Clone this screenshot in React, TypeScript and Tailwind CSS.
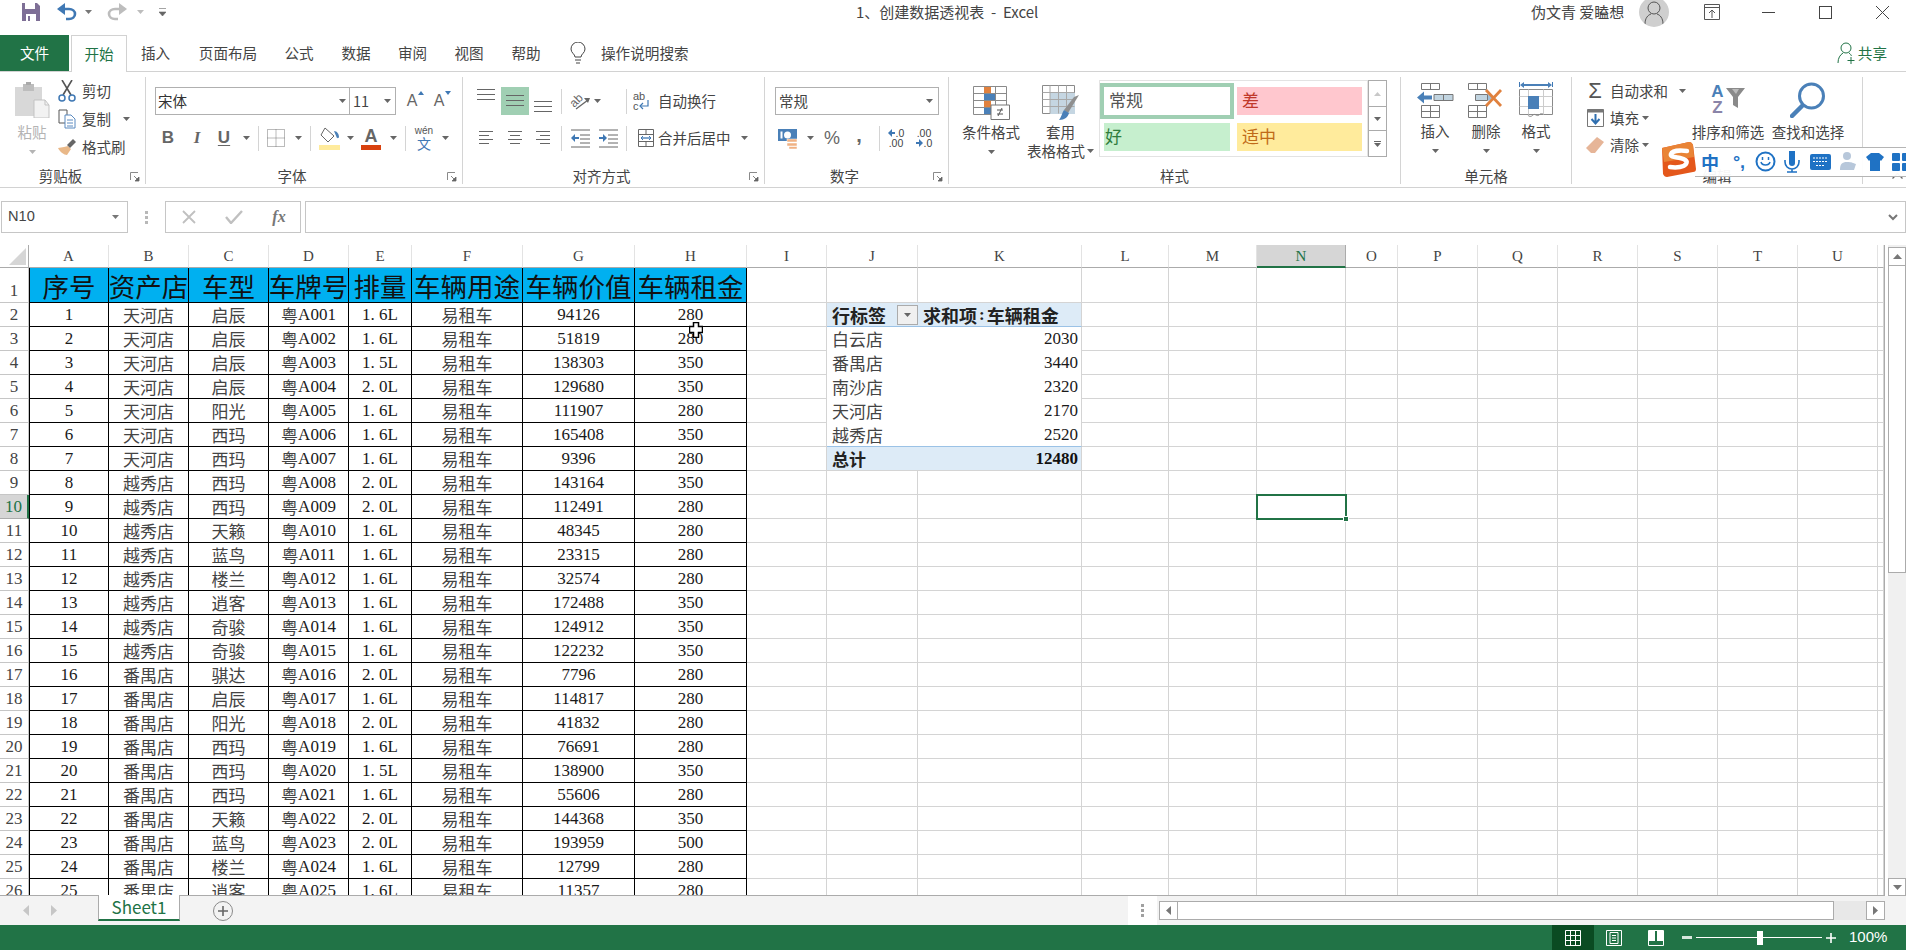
import React from "react";

type Row = [number, string, string, string, string, number, number];

const shop1 = "天河店";
const shop2 = "越秀店";
const shop3 = "番禺店";
const rows: Row[] = [
  [1, shop1, "启辰", "A001", "1. 6L", 94126, 280],
  [2, shop1, "启辰", "A002", "1. 6L", 51819, 280],
  [3, shop1, "启辰", "A003", "1. 5L", 138303, 350],
  [4, shop1, "启辰", "A004", "2. 0L", 129680, 350],
  [5, shop1, "阳光", "A005", "1. 6L", 111907, 280],
  [6, shop1, "西玛", "A006", "1. 6L", 165408, 350],
  [7, shop1, "西玛", "A007", "1. 6L", 9396, 280],
  [8, shop2, "西玛", "A008", "2. 0L", 143164, 350],
  [9, shop2, "西玛", "A009", "2. 0L", 112491, 280],
  [10, shop2, "天籁", "A010", "1. 6L", 48345, 280],
  [11, shop2, "蓝鸟", "A011", "1. 6L", 23315, 280],
  [12, shop2, "楼兰", "A012", "1. 6L", 32574, 280],
  [13, shop2, "逍客", "A013", "1. 6L", 172488, 350],
  [14, shop2, "奇骏", "A014", "1. 6L", 124912, 350],
  [15, shop2, "奇骏", "A015", "1. 6L", 122232, 350],
  [16, shop3, "骐达", "A016", "2. 0L", 7796, 280],
  [17, shop3, "启辰", "A017", "1. 6L", 114817, 280],
  [18, shop3, "阳光", "A018", "2. 0L", 41832, 280],
  [19, shop3, "西玛", "A019", "1. 6L", 76691, 280],
  [20, shop3, "西玛", "A020", "1. 5L", 138900, 350],
  [21, shop3, "西玛", "A021", "1. 6L", 55606, 280],
  [22, shop3, "天籁", "A022", "2. 0L", 144368, 350],
  [23, shop3, "蓝鸟", "A023", "2. 0L", 193959, 500],
  [24, shop3, "楼兰", "A024", "1. 6L", 12799, 280],
  [25, shop3, "逍客", "A025", "1. 6L", 11357, 280],
];

const colNames = ["A", "B", "C", "D", "E", "F", "G", "H", "I", "J", "K", "L", "M", "N", "O", "P", "Q", "R", "S", "T", "U", ""];
const headers = ["序号", "资产店", "车型", "车牌号", "排量", "车辆用途", "车辆价值", "车辆租金"];
const pivot: [string, number][] = [
  ["白云店", 2030],
  ["番禺店", 3440],
  ["南沙店", 2320],
  ["天河店", 2170],
  ["越秀店", 2520],
];

const serif = "[font-family:'Liberation_Serif',serif]";
const gridCell = "border-r border-b border-[#d4d4d4]";
const dataCell = "border-r border-b border-black flex items-center justify-center overflow-hidden whitespace-nowrap";
const num = "[font-family:'Liberation_Serif',serif] text-[17px] leading-[20px] text-[#1a1a1a]";
const cjk = "text-[17px] leading-[20px] text-[#444]";

function Caret({ c = "#666666" }: { c?: string }) {
  return (
    <svg width="7" height="4" viewBox="0 0 7 4" className="shrink-0">
      <path d="M0 0h7L3.5 4z" fill={c} />
    </svg>
  );
}

function S({ w, children }: { w: string; children?: React.ReactNode }) {
  return <div className={`${w} h-full flex items-center justify-center shrink-0`}>{children}</div>;
}

function Sep() {
  return <div className="w-px h-[25px] bg-[#d4d4d4]" />;
}

function Launcher() {
  return (
    <svg width="10" height="10" viewBox="0 0 10 10" className="absolute right-[5px] top-[4px]">
      <path d="M0.5 8V0.5H8" fill="none" stroke="#8a8a8a" />
      <path d="M4 4l4 4M9 5v4H5z" stroke="#666" fill="#666" strokeWidth="0.8" />
    </svg>
  );
}

function Group({ w, label, launcher, children }: { w: string; label: string; launcher?: boolean; children: React.ReactNode }) {
  return (
    <div className={`${w} h-[107px] shrink-0 border-r border-[#d4d4d4] flex flex-col`}>
      <div className="h-[91px] overflow-visible">{children}</div>
      <div className={`relative h-[16px] leading-[16px] text-center text-[14.5px] text-[#444] ${launcher ? "pr-[24px]" : ""}`}>
        {label}
        {launcher && <Launcher />}
      </div>
    </div>
  );
}

function Lines({ w = 18, rows = 3, gap = 5, widths }: { w?: number; rows?: number; gap?: number; widths?: number[][] }) {
  const h = (rows - 1) * gap + 1;
  return (
    <svg width={w} height={h + 1} viewBox={`0 0 ${w} ${h + 1}`}>
      {Array.from({ length: rows }).map((_, i) => {
        const x = widths ? widths[i] : [0, w];
        return <path key={i} d={`M${x[0]} ${i * gap + 0.5}H${x[1]}`} stroke="#666" />;
      })}
    </svg>
  );
}

function RibbonText({ children, c = "" }: { children: React.ReactNode; c?: string }) {
  return <span className={`text-[14.5px] text-[#444] whitespace-nowrap leading-[20px] ${c}`}>{children}</span>;
}

function SaveIcon() {
  return (
    <svg width="18" height="18" viewBox="0 0 18 18">
      <path d="M0 0h15l3 3v15H0z" fill="#7e6f96" />
      <path d="M3 0h10v6H3z" fill="#fff" />
      <path d="M4 11h10v7H4z" fill="#fff" />
      <path d="M6 13h2v5H6z" fill="#7e6f96" />
    </svg>
  );
}

function Undo({ c, flip }: { c: string; flip?: boolean }) {
  return (
    <svg width="20" height="18" viewBox="0 0 20 18" className={flip ? "-scale-x-100" : ""}>
      <path d="M2 6h10c3.5 0 6 2.200 6 5s-2.500 5-6 5H9" fill="none" stroke={c} strokeWidth="2.600" />
      <path d="M8 0v12L0 6z" fill={c} />
    </svg>
  );
}

function PasteIcon() {
  return (
    <svg width="36" height="36" viewBox="0 0 36 36">
      <path d="M1 5h27v29H1z" fill="#d8d8d8" />
      <path d="M9 2h11v7H9z" fill="#bdbdbd" />
      <path d="M12 0h5v3h-5z" fill="#aaa" />
      <path d="M20 18h11l4 5v13H20z" fill="#f2f2f2" stroke="#c3c3c3" />
      <path d="M31 18v5h4" fill="none" stroke="#c3c3c3" />
    </svg>
  );
}

function Scissors() {
  return (
    <svg width="18" height="22" viewBox="0 0 18 22">
      <path d="M4 0l9 15M14 0L5 15" stroke="#555" strokeWidth="1.600" fill="none" />
      <circle cx="4" cy="18" r="3" fill="none" stroke="#3f78b4" strokeWidth="1.500" />
      <circle cx="14" cy="18" r="3" fill="none" stroke="#3f78b4" strokeWidth="1.500" />
    </svg>
  );
}

function CopyIcon() {
  return (
    <svg width="18" height="20" viewBox="0 0 18 20">
      <path d="M1 1h8v13H1z" fill="#fff" stroke="#555" />
      <path d="M7 6h6l4 4v9H7z" fill="#fff" stroke="#5a8ac0" />
      <path d="M9 11h6M9 14h6M9 17h6" stroke="#5a8ac0" />
    </svg>
  );
}

function Brush() {
  return (
    <svg width="18" height="18" viewBox="0 0 18 18">
      <path d="M10 8l3 3-4 6c-3 0-7-3-9-7l6-1z" fill="#e9b888" />
      <path d="M9 7l6-6 3 3-6 6z" fill="#666" />
    </svg>
  );
}

function BorderIcon() {
  return (
    <svg width="18" height="18" viewBox="0 0 18 18">
      <path d="M.5.5h17v17H.5zM9 .5v17M.5 9h17" fill="none" stroke="#777" strokeDasharray="1 1" />
    </svg>
  );
}

function FillIcon() {
  return (
    <svg width="21" height="24" viewBox="0 0 21 24">
      <path d="M6 2l9 8-6 6-7-7z" fill="#fff" stroke="#666" />
      <path d="M15 5c3 0 5 3 5 6 0 1-2 2-2.500 0z" fill="#4a80b8" />
      <path d="M0 19h21v5H0z" fill="#ffeb9c" />
    </svg>
  );
}

function OrientIcon() {
  return (
    <svg width="22" height="20" viewBox="0 0 22 20">
      <text x="1" y="13" fontSize="12" fill="#666" transform="rotate(-45 8 10)" fontFamily="Liberation Sans">ab</text>
      <path d="M7 18l12-9" stroke="#666" strokeWidth="1.300" />
      <path d="M15 7l6 0-2 5z" fill="#666" />
    </svg>
  );
}

function IndentIcon({ out }: { out?: boolean }) {
  return (
    <svg width="19" height="19" viewBox="0 0 19 19">
      <path d="M0 1h19M9 6h10M9 10h10M9 14h10M0 18h19" stroke="#666" />
      {out ? <path d="M0 9l4-4v3h4v2H4v3z" fill="#3f78b4" /> : <path d="M8 9L4 5v3H0v2h4v3z" fill="#3f78b4" />}
    </svg>
  );
}

function WrapIcon() {
  return (
    <svg width="16" height="20" viewBox="0 0 16 20">
      <text x="0" y="9" fontSize="11" fill="#555" fontFamily="Liberation Sans">ab</text>
      <text x="0" y="19" fontSize="11" fill="#555" fontFamily="Liberation Sans">c</text>
      <path d="M15 9v6H8" fill="none" stroke="#3f78b4" strokeWidth="1.200" />
      <path d="M10 12l-3 3 3 3" fill="none" stroke="#3f78b4" strokeWidth="1.200" />
    </svg>
  );
}

function MergeIcon() {
  return (
    <svg width="16" height="18" viewBox="0 0 16 18">
      <path d="M.5.5h15v17H.5zM.5 5.500h15M.5 12.500h15M8 .5v5M8 12.500v5" fill="none" stroke="#666" />
      <path d="M3 9h10" stroke="#3f78b4" strokeWidth="1.300" />
      <path d="M5 7L3 9l2 2M11 7l2 2-2 2" fill="none" stroke="#3f78b4" />
    </svg>
  );
}

function AccountIcon() {
  return (
    <svg width="21" height="21" viewBox="0 0 21 21">
      <path d="M0 1h19v12H0z" fill="#4a80b8" />
      <circle cx="9.500" cy="7" r="3.500" fill="#fff" />
      <path d="M2.500 3.500h2v7h-2z" fill="#fff" />
      <path d="M9 11h10v3H9zM9 15h10v3H9zM11 18.500h8v2.500h-8z" fill="#f0b183" stroke="#fff" strokeWidth="0.500" />
    </svg>
  );
}

function DecIcon({ up }: { up?: boolean }) {
  const base = "text-[10.5px] leading-[10.5px] text-[#444] [font-family:'Liberation_Sans',sans-serif]";
  return (
    <div className="flex flex-col items-center">
      {up ? (
        <>
          <div className="flex items-center gap-[1px]">
            <svg width="7" height="8" viewBox="0 0 7 8"><path d="M0 4l4-4v3h3v2H4v3z" fill="#3f78b4" /></svg>
            <span className={base}>.0</span>
          </div>
          <span className={base}>.00</span>
        </>
      ) : (
        <>
          <span className={base}>.00</span>
          <div className="flex items-center gap-[1px]">
            <svg width="7" height="8" viewBox="0 0 7 8"><path d="M7 4L3 0v3H0v2h3v3z" fill="#3f78b4" /></svg>
            <span className={base}>.0</span>
          </div>
        </>
      )}
    </div>
  );
}

function CondIcon() {
  return (
    <svg width="37" height="34" viewBox="0 0 37 34">
      <path d="M.5.5h33v28H.5zM.5 7.500h33M.5 14.500h33M.5 21.500h33M11.500.5v28M22.500.5v28" fill="#fff" stroke="#8a8a8a" />
      <path d="M11 1h7v6h-7z M11 15h7v6h-7z" fill="#e0813e" />
      <path d="M11 8h11v6H11z M11 22h7v6h-7z" fill="#4a80b8" />
      <path d="M18 19h18.500v14.500H18z" fill="#fff" stroke="#777" />
      <path d="M24 24h6M24 28h6M29 22l-4 8" stroke="#555" />
    </svg>
  );
}

function TableFmtIcon() {
  return (
    <svg width="37" height="36" viewBox="0 0 37 36">
      <path d="M.5.5h32v28H.5z" fill="#fff" stroke="#8a8a8a" />
      <path d="M8 8h25v21H8z" fill="#c5d6e2" />
      <path d="M.5 7.500h32M.5 14.500h32M.5 21.500h32M8 .5v28M16.500.5v28M24.500.5v28" stroke="#a8a8a8" fill="none" />
      <path d="M32 12l5-2-11 18-4-3z" fill="#8f8f8f" />
      <path d="M22 25l5 3c-1 4-4 7-10 7 2-2 3-7 5-10z" fill="#4a80b8" />
    </svg>
  );
}

function InsertCellIcon() {
  return (
    <svg width="37" height="35" viewBox="0 0 37 35">
      <path d="M4.500.5h18v6h-18zM13.500.5v6M4.500 22.500h18v12h-18zM4.500 28.500h18M13.500 22.500v12" fill="#fff" stroke="#777" />
      <path d="M17 11.500h19v6H17zM26.500 11.500v6" fill="#c1d4e0" stroke="#777" />
      <path d="M0 14.500l7-6v4h8v4H7v4z" fill="#4a80b8" />
    </svg>
  );
}

function DeleteCellIcon() {
  return (
    <svg width="37" height="35" viewBox="0 0 37 35">
      <path d="M.5.5h18v6H.5zM9.500.5v6M.5 22.500h18v12H.5zM.5 28.500h18M9.500 22.500v12" fill="#fff" stroke="#777" />
      <path d="M7.500 11.500h12v6h-12z" fill="#c1d4e0" stroke="#777" />
      <path d="M20 11l5 3.500-5 3.500z" fill="#9fbfd8" />
      <path d="M18 7l15 16M33 7L18 23" stroke="#e0813e" strokeWidth="2.800" />
    </svg>
  );
}

function FormatCellIcon() {
  return (
    <svg width="34" height="36" viewBox="0 0 34 36">
      <path d="M.5 0v5M33.500 0v5" stroke="#3f78b4" />
      <path d="M3 3h28" stroke="#4a80b8" strokeWidth="2" />
      <path d="M1 3l4-3v6zM33 3l-4-3v6z" fill="#4a80b8" />
      <path d="M.5 7.500h33v25H.5z" fill="#fff" stroke="#8a8a8a" />
      <path d="M.5 14.500h33M.5 24.500h33M9.500 7.500v25M24.500 7.500v25" stroke="#ccc" fill="none" />
      <path d="M9 14h11v13H9z" fill="#4a80b8" />
      <path d="M8 32c2 3 4 3 6 1s4 2 6 0 2-1 4-1" fill="none" stroke="#888" />
    </svg>
  );
}

function SortIcon() {
  return (
    <div className="flex items-center gap-[2px] h-[35px]">
      <div className="flex flex-col items-center leading-[16px] font-[600] text-[17px] [font-family:'Liberation_Sans',sans-serif]">
        <span className="text-[#4a80b8]">A</span>
        <span className="text-[#8a84a8]">Z</span>
      </div>
      <svg width="19" height="20" viewBox="0 0 19 20" className="mb-[4px]">
        <path d="M0 0h19L12 9v11l-5-3V9z" fill="#8a8a8a" />
        <path d="M6 1h7l-3 5z" fill="#bbb" />
      </svg>
    </div>
  );
}

function FindIcon() {
  return (
    <svg width="36" height="36" viewBox="0 0 36 36">
      <circle cx="21.500" cy="14" r="12" fill="#fff" stroke="#4a80b8" strokeWidth="3" />
      <path d="M12 24L2 34" stroke="#4a80b8" strokeWidth="4.500" strokeLinecap="round" />
    </svg>
  );
}

function ImeLogo() {
  return (
    <svg width="36" height="36" viewBox="0 0 36 36">
      <path d="M2 6L29 0c2 0 3 1 4 3l3 24c0 2-1 3-3 3L7 35c-2 0-3-1-4-3z" fill="#e4571b" />
      <path d="M2 6L29 0c2 0 3 1 4 3l1 12L4 20z" fill="#e98436" />
      <path d="M27 9c-8-1-15 0-16 3s4 3 9 4 8 3 6 6-9 4-16 3" fill="none" stroke="#fff" strokeWidth="4.500" strokeLinecap="round" />
    </svg>
  );
}

export default function App() {
  return (
    <div className="relative w-[1906px] h-[950px] overflow-hidden bg-white flex flex-col [font-family:'Noto_Sans_CJK_SC',sans-serif] text-[#444]">
      {/* title bar */}
      <div className="h-[35px] shrink-0 flex items-center pb-[11px]">
        <div className="w-[856px] flex items-center h-full shrink-0">
          <div className="ml-[22px]"><SaveIcon /></div>
          <div className="ml-[17px]"><Undo c="#3f78b4" /></div>
          <div className="ml-[8px]"><Caret c="#777" /></div>
          <div className="ml-[15px]"><Undo c="#bdbdbd" flip /></div>
          <div className="ml-[10px]"><Caret c="#bdbdbd" /></div>
          <svg width="7" height="8" viewBox="0 0 7 8" className="ml-[15px]"><path d="M0 .5h7M0 4h7L3.500 8z" fill="#666" stroke="#666" strokeWidth="0.600" /></svg>
        </div>
        <div className="w-[675px] shrink-0 text-[15px] leading-[20px] text-[#444] whitespace-nowrap">1、创建数据透视表&nbsp; - &nbsp;Excel</div>
        <div className="text-[15px] leading-[20px] text-[#444] whitespace-nowrap w-[100px] shrink-0">伪文青 爱瞌想</div>
        <div className="w-[30px] h-[30px] rounded-full bg-[#cfcfcf] ml-[8px] flex items-center justify-center overflow-hidden shrink-0">
          <svg width="20" height="24" viewBox="0 0 20 24"><circle cx="10" cy="8" r="6" fill="#cfcfcf" stroke="#555" /><path d="M1 24c0-6 3-9 6-10M19 24c0-6-3-9-6-10" fill="none" stroke="#555" /></svg>
        </div>
        <div className="ml-[35px] flex items-center">
          <svg width="16" height="16" viewBox="0 0 16 16"><path d="M.5.5h15v15H.5zM.5 3.500h15M8 14V6M5 9l3-3 3 3" fill="none" stroke="#555" /></svg>
          <div className="w-[13px] h-px bg-[#444] ml-[42px]" />
          <div className="w-[13px] h-[13px] border border-[#444] ml-[44px]" />
          <svg width="13" height="13" viewBox="0 0 13 13" className="ml-[44px]"><path d="M0 0l13 13M13 0L0 13" stroke="#444" /></svg>
        </div>
      </div>

      {/* tabs */}
      <div className="h-[37px] shrink-0 border-b border-[#d2d2d2] flex items-stretch text-[14.6px] text-[#444] whitespace-nowrap">
        <div className="w-[69px] bg-[#217346] text-white flex items-center justify-center">文件</div>
        <div className="w-[56px] ml-[2px] -mb-px bg-white border-t border-l border-r border-[#d2d2d2] text-[#217346] flex items-center justify-center">开始</div>
        <div className="w-[57px] flex items-center justify-center">插入</div>
        <div className="w-[84px] ml-[2px] flex items-center justify-center">页面布局</div>
        <div className="w-[58px] flex items-center justify-center">公式</div>
        <div className="w-[56px] flex items-center justify-center">数据</div>
        <div className="w-[57px] flex items-center justify-center">审阅</div>
        <div className="w-[56px] flex items-center justify-center">视图</div>
        <div className="w-[58px] flex items-center justify-center">帮助</div>
        <div className="w-[46px] flex items-center justify-center">
          <svg width="16" height="22" viewBox="0 0 16 22"><path d="M5 15c0-3-4-4-4-8a7 7 0 0 1 14 0c0 4-4 5-4 8zM5 18h6M6 21h4" fill="none" stroke="#444" /></svg>
        </div>
        <div className="flex items-center">操作说明搜索</div>
        <div className="ml-auto flex items-center text-[#217346] pr-[19px]">
          <svg width="20" height="22" viewBox="0 0 20 22" className="mr-[1px]"><circle cx="9" cy="6" r="5" fill="none" stroke="#217346" /><path d="M1 21c0-5 2-8 5-10M12 11c1.500 1 2 2 2.500 3M14 15v7M10.500 18.500h7" fill="none" stroke="#217346" /></svg>
          共享
        </div>
      </div>

      {/* ribbon */}
      <div className="h-[116px] shrink-0 border-b border-[#d2d2d2] pt-[5px] flex items-start">
        <Group w="w-[146px]" label="剪贴板" launcher>
          <div className="flex">
            <div className="ml-[13px] w-[38px] flex flex-col items-center">
              <div className="mt-[5px]"><PasteIcon /></div>
              <div className="mt-[4px] h-[20px] text-[14.5px] leading-[20px] text-[#b4b4b4]">粘贴</div>
              <div className="mt-[8px]"><Caret c="#b4b4b4" /></div>
            </div>
            <div className="ml-[6px] flex flex-col">
              <div className="h-[28px] flex items-center"><S w="w-[20px]"><Scissors /></S><RibbonText c="ml-[5px]">剪切</RibbonText></div>
              <div className="h-[28px] flex items-center"><S w="w-[20px]"><CopyIcon /></S><RibbonText c="ml-[5px]">复制</RibbonText><div className="ml-[12px]"><Caret /></div></div>
              <div className="h-[28px] flex items-center"><S w="w-[20px]"><Brush /></S><RibbonText c="ml-[5px]">格式刷</RibbonText></div>
            </div>
          </div>
        </Group>

        <Group w="w-[317px]" label="字体" launcher>
          <div className="ml-[9px] mt-[10px] h-[28px] flex items-center">
            <div className="w-[195px] h-full border border-[#b0b0b0] flex items-center justify-between pl-[2px] pr-[3px]">
              <span className="text-[14.5px] leading-[20px] text-[#333]">宋体</span><Caret />
            </div>
            <div className="w-[47px] h-full border border-[#b0b0b0] -ml-px flex items-center justify-between pl-[3px] pr-[4px]">
              <span className="text-[14.5px] leading-[20px] text-[#444]">11</span><Caret />
            </div>
            <div className="w-[26px] ml-[3px] flex justify-center relative">
              <span className="text-[16px] text-[#666] [font-family:'Liberation_Sans',sans-serif]">A</span>
              <svg width="6" height="4" viewBox="0 0 6 4" className="absolute right-[1px] top-[2px]"><path d="M0 4h6L3 0z" fill="#3f78b4" /></svg>
            </div>
            <div className="w-[26px] ml-[1px] flex justify-center relative">
              <span className="text-[16px] text-[#666] [font-family:'Liberation_Sans',sans-serif]">A</span>
              <svg width="6" height="4" viewBox="0 0 6 4" className="absolute right-[1px] top-[2px]"><path d="M0 0h6L3 4z" fill="#3f78b4" /></svg>
            </div>
          </div>
          <div className="ml-[9px] mt-[9px] h-[28px] flex items-center text-[#666] [font-family:'Liberation_Sans',sans-serif]">
            <S w="w-[26px]"><span className="text-[17px] font-bold">B</span></S>
            <S w="w-[32px]"><span className="text-[17px] italic font-bold [font-family:'Liberation_Serif',serif]">I</span></S>
            <S w="w-[22px]"><span className="text-[17px] font-bold underline underline-offset-2">U</span></S>
            <S w="w-[22px]"><Caret /></S>
            <S w="w-[2px]"><Sep /></S>
            <S w="w-[34px]"><BorderIcon /></S>
            <S w="w-[10px]"><Caret /></S>
            <S w="w-[14px]"><Sep /></S>
            <S w="w-[24px]"><FillIcon /></S>
            <S w="w-[18px]"><Caret /></S>
            <S w="w-[24px]">
              <div className="flex flex-col items-center">
                <span className="text-[18px] leading-[18px] font-bold">A</span>
                <div className="w-[20px] h-[5px] bg-[#d9410e]" />
              </div>
            </S>
            <S w="w-[20px]"><Caret /></S>
            <S w="w-[4px]"><Sep /></S>
            <S w="w-[34px]">
              <div className="flex flex-col items-center leading-none">
                <span className="text-[10px] leading-[10px] text-[#555]">wén</span>
                <span className="text-[14px] leading-[14px] text-[#3f78b4] [font-family:'Noto_Sans_CJK_SC',sans-serif]">文</span>
              </div>
            </S>
            <S w="w-[8px]"><Caret /></S>
          </div>
        </Group>

        <Group w="w-[302px]" label="对齐方式" launcher>
          <div className="ml-[9px] mt-[10px] h-[28px] flex items-center">
            <S w="w-[28px]"><div className="mb-[12px]"><Lines w={18} /></div></S>
            <S w="w-[30px]"><div className="w-[28px] h-[28px] bg-[#a0cfb3] flex items-center justify-center"><Lines w={18} /></div></S>
            <S w="w-[26px]"><div className="mt-[12px]"><Lines w={18} /></div></S>
            <S w="w-[10px]"><Sep /></S>
            <S w="w-[28px]"><OrientIcon /></S>
            <S w="w-[6px]"><Caret /></S>
            <div className="ml-[26px] w-px"><Sep /></div>
            <S w="w-[16px]"><div className="ml-[11px]"><WrapIcon /></div></S>
            <RibbonText c="ml-[15px]">自动换行</RibbonText>
          </div>
          <div className="ml-[9px] mt-[9px] h-[28px] flex items-center">
            <S w="w-[28px]"><Lines w={14} rows={4} gap={4} widths={[[0,14],[0,10],[0,14],[0,10]]} /></S>
            <S w="w-[30px]"><Lines w={14} rows={4} gap={4} widths={[[0,14],[2,12],[0,14],[2,12]]} /></S>
            <S w="w-[26px]"><Lines w={14} rows={4} gap={4} widths={[[0,14],[4,14],[0,14],[4,14]]} /></S>
            <S w="w-[10px]"><Sep /></S>
            <S w="w-[28px]"><IndentIcon out /></S>
            <S w="w-[28px]"><IndentIcon /></S>
            <div className="ml-[4px] w-px"><Sep /></div>
            <div className="ml-[11px]"><MergeIcon /></div>
            <RibbonText c="ml-[4px]">合并后居中</RibbonText>
            <div className="ml-[10px]"><Caret /></div>
          </div>
        </Group>

        <Group w="w-[184px]" label="数字" launcher>
          <div className="ml-[10px] mt-[10px] w-[164px] h-[28px] border border-[#b0b0b0] flex items-center justify-between pl-[3px] pr-[5px]">
            <span className="text-[14.5px] leading-[20px] text-[#444]">常规</span><Caret />
          </div>
          <div className="ml-[10px] mt-[9px] h-[28px] flex items-center">
            <S w="w-[26px]"><AccountIcon /></S>
            <S w="w-[18px]"><Caret /></S>
            <S w="w-[26px]"><span className="text-[18px] text-[#666] [font-family:'Liberation_Sans',sans-serif]">%</span></S>
            <S w="w-[28px]"><span className="text-[20px] leading-[20px] font-bold text-[#666] -mt-[6px] [font-family:'Liberation_Sans',sans-serif]">,</span></S>
            <S w="w-[12px]"><Sep /></S>
            <S w="w-[22px]"><DecIcon up /></S>
            <S w="w-[34px]"><DecIcon /></S>
          </div>
        </Group>

        <Group w="w-[452px]" label="样式">
          <div className="flex h-full">
            <div className="ml-[12px] w-[60px] flex flex-col items-center">
              <div className="mt-[9px]"><CondIcon /></div>
              <RibbonText c="mt-[2px]">条件格式</RibbonText>
              <div className="mt-[8px]"><Caret /></div>
            </div>
            <div className="ml-[1px] w-[77px] flex flex-col items-center">
              <div className="mt-[8px]"><TableFmtIcon /></div>
              <RibbonText c="mt-[1px]">套用</RibbonText>
              <div className="flex items-center -mt-px"><RibbonText>表格格式</RibbonText><div className="ml-[2px]"><Caret /></div></div>
            </div>
            <div className="mt-[3px] h-[77px] w-[269px] border border-[#e3e3e3] flex shrink-0">
              <div className="w-[134px] shrink-0 flex flex-col">
                <div className="mt-[2px] h-[36px] border-[4px] border-[#a0cfb3] bg-white pl-[5px] text-[17px] leading-[26px] text-[#555]">常规</div>
                <div className="mt-[4px] ml-[4px] w-[126px] h-[28px] bg-[#c6efce] pl-[1px] text-[17px] leading-[26px] text-[#2f7d3c]">好</div>
              </div>
              <div className="ml-[3px] w-[125px] flex flex-col">
                <div className="mt-[6px] h-[28px] bg-[#ffc7ce] pl-[5px] text-[17px] leading-[26px] text-[#c0392b]">差</div>
                <div className="mt-[8px] h-[28px] bg-[#ffeb9c] pl-[5px] text-[17px] leading-[26px] text-[#c06a18]">适中</div>
              </div>
            </div>
            <div className="mt-[3px] w-[19px] h-[77px] border border-[#ababab] flex flex-col items-center shrink-0">
              <div className="h-[26px] w-full border-b border-[#ababab] flex items-center justify-center"><svg width="7" height="4" viewBox="0 0 7 4"><path d="M0 4h7L3.500 0z" fill="#c8c8c8" /></svg></div>
              <div className="h-[24px] w-full border-b border-[#ababab] flex items-center justify-center"><Caret /></div>
              <div className="flex-1 flex flex-col items-center justify-center gap-[1px]"><div className="w-[7px] h-px bg-[#666]" /><Caret /></div>
            </div>
          </div>
        </Group>

        <Group w="w-[171px]" label="单元格">
          <div className="flex ml-[9px]">
            <div className="w-[50px] flex flex-col items-center"><div className="mt-[6px]"><InsertCellIcon /></div><RibbonText c="mt-[3px]">插入</RibbonText><div className="mt-[8px]"><Caret /></div></div>
            <div className="ml-[1px] w-[50px] flex flex-col items-center"><div className="mt-[6px]"><DeleteCellIcon /></div><RibbonText c="mt-[3px]">删除</RibbonText><div className="mt-[8px]"><Caret /></div></div>
            <div className="w-[50px] flex flex-col items-center"><div className="mt-[5px]"><FormatCellIcon /></div><RibbonText c="mt-[3px]">格式</RibbonText><div className="mt-[8px]"><Caret /></div></div>
          </div>
        </Group>

        <Group w="w-[291px]" label="编辑">
          <div className="flex">
            <div className="ml-[12px] w-[106px] flex flex-col">
              <div className="h-[27px] flex items-center">
                <S w="w-[22px]"><span className="text-[22px] leading-[22px] text-[#555] [font-family:'Liberation_Sans',sans-serif]">Σ</span></S>
                <RibbonText c="ml-[4px]">自动求和</RibbonText>
                <div className="ml-[11px]"><Caret /></div>
              </div>
              <div className="h-[27px] flex items-center">
                <S w="w-[22px]">
                  <svg width="17" height="18" viewBox="0 0 17 18"><path d="M.5.5h16v17H.5z" fill="#fff" stroke="#777" /><path d="M.5.5h16v3H.5z" fill="#777" /><path d="M8.500 5v9M4.500 10l4 4.500 4-4.500" fill="none" stroke="#2f6fb0" strokeWidth="2" /></svg>
                </S>
                <RibbonText c="ml-[4px]">填充</RibbonText>
                <div className="ml-[3px]"><Caret /></div>
              </div>
              <div className="h-[27px] flex items-center">
                <S w="w-[22px]">
                  <svg width="18" height="16" viewBox="0 0 18 16"><path d="M11 0l7 5-9 11H5L0 11z" fill="#e6b598" /></svg>
                </S>
                <RibbonText c="ml-[4px]">清除</RibbonText>
                <div className="ml-[3px]"><Caret /></div>
              </div>
            </div>
            <div className="w-[76px] flex flex-col items-center"><div className="mt-[5px]"><SortIcon /></div><RibbonText c="mt-[5px]">排序和筛选</RibbonText></div>
            <div className="ml-[4px] w-[76px] flex flex-col items-center"><div className="mt-[5px]"><FindIcon /></div><RibbonText c="mt-[4px]">查找和选择</RibbonText></div>
          </div>
        </Group>

        <div className="flex-1 h-[107px] flex flex-col items-center justify-end pb-[5px] pl-[26px]">
          <svg width="11" height="6" viewBox="0 0 11 6"><path d="M.5 5.500l5-5 5 5" fill="none" stroke="#666" strokeWidth="1.300" /></svg>
        </div>
      </div>

      {/* formula bar */}
      <div className="h-[57px] shrink-0 flex items-start pt-[13px]">
        <div className="ml-[1px] w-[127px] h-[32px] border border-[#c6c6c6] flex items-center justify-between pl-[6px] pr-[8px]">
          <span className="text-[14.6px] text-[#444] [font-family:'Liberation_Sans',sans-serif]">N10</span><Caret c="#777" />
        </div>
        <div className="w-[37px] h-[32px] flex flex-col items-center justify-center gap-[2px]">
          <div className="w-[3px] h-[3px] bg-[#b8b8b8]" /><div className="w-[3px] h-[3px] bg-[#b8b8b8]" /><div className="w-[3px] h-[3px] bg-[#b8b8b8]" />
        </div>
        <div className="w-[136px] h-[32px] border border-[#c6c6c6] flex items-center">
          <S w="w-[45px]"><svg width="14" height="14" viewBox="0 0 14 14"><path d="M1 1l12 12M13 1L1 13" stroke="#c0c0c0" strokeWidth="1.800" /></svg></S>
          <S w="w-[46px]"><svg width="18" height="14" viewBox="0 0 18 14"><path d="M1 7l5 6L17 1" fill="none" stroke="#c0c0c0" strokeWidth="2.400" /></svg></S>
          <S w="w-[44px]"><span className="text-[16px] italic font-bold text-[#777] [font-family:'Liberation_Serif',serif]">fx</span></S>
        </div>
        <div className="ml-[4px] flex-1 h-[32px] border border-[#c6c6c6] flex items-center justify-end pr-[7px]">
          <svg width="10" height="7" viewBox="0 0 10 7"><path d="M1 1l4 4 4-4" fill="none" stroke="#777" strokeWidth="2" /></svg>
        </div>
      </div>

      {/* sheet */}
      <div className="h-[651px] shrink-0 flex items-stretch">
        <div className="w-[1885px] h-full border-r border-b border-[#ababab] overflow-hidden shrink-0">
          <div className="grid grid-cols-[29px_80px_80px_80px_80px_63px_111px_112px_112px_80px_91px_164px_87px_88px_89px_52px_80px_80px_80px_80px_80px_80px_6px] grid-rows-[23px_35px] auto-rows-[24px]">
            {/* header row */}
            <div className="border-b border-[#ababab] border-r flex items-end justify-end pr-[2px] pb-[2px]">
              <svg width="17" height="17" viewBox="0 0 17 17"><path d="M17 0v17H0z" fill="#d6d6d6" /></svg>
            </div>
            {colNames.map((c, i) =>
              c === "N" ? (
                <div key={c} className={`${serif} border-b-2 border-r border-b-[#217346] border-r-[#ababab] bg-[#d6d6d6] text-[15px] leading-[20px] text-[#217346] flex items-center justify-center`}>{c}</div>
              ) : (
                <div key={i} className={`${serif} border-b border-[#ababab] border-r border-r-[#e3e3e3] text-[15px] leading-[20px] text-[#444] flex items-center justify-center`}>{c}</div>
              )
            )}

            {/* row 1 */}
            <div className={`${serif} border-r border-b border-[#c6c6c6] text-[17px] leading-[20px] text-[#444] flex items-end justify-center pb-[1px]`}>1</div>
            {headers.map((h, i) => (
              <div key={h} className={`border-r border-b border-black bg-[#00b0f0] text-[26.5px] leading-[33px] text-[#111] flex items-center justify-center whitespace-nowrap overflow-hidden ${i === 0 ? "border-l" : ""}`}>{h}</div>
            ))}
            {Array.from({ length: 14 }).map((_, i) => <div key={i} className={gridCell} />)}

            {/* data rows */}
            {rows.map((r, idx) => {
              const rowNo = idx + 2;
              const p = rowNo >= 3 && rowNo <= 7 ? pivot[rowNo - 3] : null;
              const rest = colNames.slice(11).map((c, i) =>
                c === "N" && rowNo === 10 ? (
                  <div key={c} className="relative outline-2 outline-[#217346] -outline-offset-1">
                    <div className="absolute right-[-3px] bottom-[-3px] w-[6px] h-[6px] bg-[#217346] border border-white" />
                  </div>
                ) : (
                  <div key={i} className={gridCell} />
                )
              );
              return (
                <React.Fragment key={rowNo}>
                  {rowNo === 10 ? (
                    <div className={`${serif} border-r-2 border-b border-r-[#217346] border-b-[#ababab] bg-[#d6d6d6] text-[17px] leading-[20px] text-[#217346] flex items-center justify-center`}>{rowNo}</div>
                  ) : (
                    <div className={`${serif} border-r border-b border-[#c6c6c6] text-[17px] leading-[20px] text-[#444] flex items-center justify-center`}>{rowNo}</div>
                  )}
                  <div className={`${dataCell} border-l ${num}`}>{r[0]}</div>
                  <div className={`${dataCell} ${cjk}`}>{r[1]}</div>
                  <div className={`${dataCell} ${cjk}`}>{r[2]}</div>
                  <div className={`${dataCell} ${cjk}`}>粤<span className={num}>{r[3]}</span></div>
                  <div className={`${dataCell} ${num}`}>{r[4]}</div>
                  <div className={`${dataCell} ${cjk}`}>易租车</div>
                  <div className={`${dataCell} ${num}`}>{r[5]}</div>
                  <div className={`${dataCell} ${num}`}>{r[6]}</div>
                  <div className={gridCell} />
                  {rowNo === 2 ? (
                    <>
                      <div className="bg-[#ddebf7] border-b border-[#9bc2e6] flex items-center justify-between pl-[5px] font-bold text-[18px] leading-[20px] text-[#222]">
                        行标签
                        <div className="w-[21px] h-[20px] bg-[#f0f0f0] border border-[#ababab] flex items-center justify-center"><Caret /></div>
                      </div>
                      <div className="bg-[#ddebf7] border-b border-r border-b-[#9bc2e6] border-r-[#d4d4d4] flex items-center pl-[5px] font-bold text-[18px] leading-[20px] text-[#222] whitespace-nowrap">
                        求和项<span className={`${serif} text-[17px] px-[2px]`}>:</span>车辆租金
                      </div>
                    </>
                  ) : p ? (
                    <>
                      <div className={`flex items-center pl-[5px] ${cjk} ${rowNo === 7 ? "border-b border-[#9bc2e6]" : ""}`}>{p[0]}</div>
                      <div className={`border-r border-r-[#d4d4d4] flex items-center justify-end pr-[3px] ${num} ${rowNo === 7 ? "border-b border-b-[#9bc2e6]" : ""}`}>{p[1]}</div>
                    </>
                  ) : rowNo === 8 ? (
                    <>
                      <div className="bg-[#ddebf7] border-b border-[#d4d4d4] flex items-center pl-[5px] font-bold text-[17px] leading-[20px] text-[#222]">总计</div>
                      <div className={`${serif} bg-[#ddebf7] border-b border-r border-[#d4d4d4] flex items-center justify-end pr-[3px] font-bold text-[17px] leading-[20px] text-[#111]`}>12480</div>
                    </>
                  ) : (
                    <>
                      <div className={gridCell} />
                      <div className={gridCell} />
                    </>
                  )}
                  {rest}
                </React.Fragment>
              );
            })}
          </div>
        </div>
        <div className="flex-1 bg-[#f0f0f0] border-l-[3px] border-white flex flex-col pt-[2px]">
          <div className="h-[19px] border border-[#ababab] bg-white flex items-center justify-center shrink-0">
            <svg width="9" height="5" viewBox="0 0 9 5"><path d="M0 5h9L4.500 0z" fill="#777" /></svg>
          </div>
          <div className="h-[307px] border-x border-b border-[#ababab] bg-white shrink-0" />
          <div className="mt-auto h-[18px] border border-[#ababab] bg-white flex items-center justify-center shrink-0">
            <svg width="9" height="5" viewBox="0 0 9 5"><path d="M0 0h9L4.500 5z" fill="#777" /></svg>
          </div>
        </div>
      </div>

      {/* sheet tabs */}
      <div className="h-[29px] shrink-0 bg-[#f3f3f3] flex items-start">
        <div className="w-[98px] h-full flex items-center shrink-0">
          <svg width="6" height="11" viewBox="0 0 6 11" className="ml-[23px]"><path d="M6 0v11L0 5.500z" fill="#c6c6c6" /></svg>
          <svg width="6" height="11" viewBox="0 0 6 11" className="ml-[22px]"><path d="M0 0v11l6-5.500z" fill="#c6c6c6" /></svg>
        </div>
        <div className="w-[82px] h-[26px] bg-white border-x border-[#ababab] border-b-2 border-b-[#217346] -mt-px flex items-center justify-center text-[17px] leading-[22px] text-[#217346] shrink-0">Sheet1</div>
        <div className="ml-[33px] mt-[5px] w-[20px] h-[20px] rounded-full border border-[#8a8a8a] flex items-center justify-center text-[#666] shrink-0">
          <svg width="10" height="10" viewBox="0 0 10 10"><path d="M5 0v10M0 5h10" stroke="#666" strokeWidth="1.600" /></svg>
        </div>
        <div className="ml-[895px] w-[29px] h-full bg-white flex flex-col items-center justify-center gap-[2px] shrink-0">
          <div className="w-[3px] h-[3px] bg-[#a0a0a0]" /><div className="w-[3px] h-[3px] bg-[#a0a0a0]" /><div className="w-[3px] h-[3px] bg-[#a0a0a0]" />
        </div>
        <div className="ml-[2px] mt-[5px] w-[726px] h-[19px] flex shrink-0 bg-[#e8e8e8]">
          <div className="w-[19px] h-full border border-[#ababab] bg-white flex items-center justify-center shrink-0">
            <svg width="5" height="9" viewBox="0 0 5 9"><path d="M5 0v9L0 4.500z" fill="#777" /></svg>
          </div>
          <div className="w-[656px] h-full border border-l-0 border-[#ababab] bg-white shrink-0" />
          <div className="ml-auto w-[19px] h-full border border-[#ababab] bg-white flex items-center justify-center shrink-0">
            <svg width="5" height="9" viewBox="0 0 5 9"><path d="M0 0v9l5-4.500z" fill="#777" /></svg>
          </div>
        </div>
      </div>

      {/* status bar */}
      <div className="h-[25px] shrink-0 bg-[#217346] flex items-stretch pl-[1552px] text-white">
        <div className="w-[42px] bg-[#0a4b22] flex items-center justify-center">
          <svg width="16" height="16" viewBox="0 0 16 16"><path d="M.5.5h15v15H.5zM5.500.5v15M10.500.5v15M.5 5.500h15M.5 10.500h15" fill="none" stroke="#fff" /></svg>
        </div>
        <div className="w-[40px] flex items-center justify-center">
          <svg width="16" height="16" viewBox="0 0 16 16"><path d="M.5.5h15v15H.5z" fill="none" stroke="#fff" /><path d="M4 2.500h8v11H4z" fill="none" stroke="#fff" /><path d="M6 5.500h4M6 8h4M6 10.500h4" stroke="#fff" /></svg>
        </div>
        <div className="w-[44px] flex items-center justify-center">
          <svg width="16" height="16" viewBox="0 0 16 16"><path d="M.5.5h15v15H.5z" fill="none" stroke="#fff" /><path d="M1 1h6v10H1zM9 1h6v10H9z" fill="#fff" /></svg>
        </div>
        <div className="w-[18px] flex items-center justify-center"><div className="w-[10px] h-[3px] bg-[#d6e6dc]" /></div>
        <div className="relative w-[126px] flex items-center">
          <div className="w-full h-px bg-white" />
          <div className="absolute left-[61px] top-[6px] w-[6px] h-[14px] bg-white" />
        </div>
        <div className="w-[18px] flex items-center justify-center">
          <svg width="10" height="10" viewBox="0 0 10 10"><path d="M5 0v10M0 5h10" stroke="#fff" strokeWidth="1.600" /></svg>
        </div>
        <div className="ml-[9px] flex items-center text-[15px] whitespace-nowrap [font-family:'Liberation_Sans',sans-serif]">100%</div>
      </div>

      {/* IME bar over the ribbon */}
      <div className="absolute left-[1660px] top-[142px] flex items-center h-[36px]">
        <div className="relative z-10 -mr-px"><ImeLogo /></div>
        <div className="h-[30px] w-[211px] mt-[3px] bg-white/95 border-y border-[#b5b5b5] flex items-center text-[#1f72c4]">
          <S w="w-[30px]"><span className="text-[18px] font-bold leading-[18px]">中</span></S>
          <S w="w-[28px]"><span className="text-[18px] font-bold leading-[18px] [font-family:'Liberation_Sans',sans-serif]">°,</span></S>
          <S w="w-[24px]">
            <svg width="21" height="21" viewBox="0 0 21 21"><circle cx="10.500" cy="10.500" r="9" fill="none" stroke="#1f72c4" strokeWidth="2" /><path d="M6 11c1 4 8 4 9 0" fill="none" stroke="#1f72c4" strokeWidth="1.500" /><path d="M7.500 6v3M13.500 6v3" stroke="#1f72c4" strokeWidth="1.500" /></svg>
          </S>
          <S w="w-[30px]">
            <svg width="16" height="22" viewBox="0 0 16 22"><path d="M5 0h6v12a3 3 0 0 1-6 0z" fill="#1f72c4" /><path d="M1 9v2a7 7 0 0 0 14 0V9M8 18v3M3 21h10" fill="none" stroke="#1f72c4" strokeWidth="1.600" /></svg>
          </S>
          <S w="w-[26px]">
            <svg width="21" height="16" viewBox="0 0 21 16"><rect width="21" height="16" rx="2" fill="#1f72c4" /><path d="M3 4h15M3 7.500h15M6 11.500h9" stroke="#fff" strokeDasharray="2 1" /></svg>
          </S>
          <S w="w-[29px]">
            <svg width="18" height="19" viewBox="0 0 18 19"><circle cx="8" cy="4" r="4" fill="#b7c7da" /><path d="M1 18c0-6 2-8 7-8s6 1 9 2l-2 6z" fill="#b7c7da" /></svg>
          </S>
          <S w="w-[26px]">
            <svg width="18" height="18" viewBox="0 0 18 18"><path d="M5 0h8l5 4-3 4-1-1v11H4V7L3 8 0 4z" fill="#1f72c4" /></svg>
          </S>
          <S w="w-[26px]">
            <svg width="18" height="18" viewBox="0 0 18 18"><rect width="8" height="8" rx="1" fill="#1f72c4" /><rect x="10" width="8" height="8" rx="1" fill="#1f72c4" /><rect y="10" width="8" height="8" rx="1" fill="#1f72c4" /><rect x="10" y="10" width="8" height="8" rx="1" fill="#1f72c4" /></svg>
          </S>
        </div>
      </div>

      {/* mouse pointer */}
      <svg width="14" height="16" viewBox="0 0 14 16" className="absolute left-[689px] top-[322px]">
        <path d="M4.500.5h5v4h4v6h-4v5h-5v-5h-4v-6h4z" fill="#fff" stroke="#000" strokeWidth="1.500" />
      </svg>
    </div>
  );
}
